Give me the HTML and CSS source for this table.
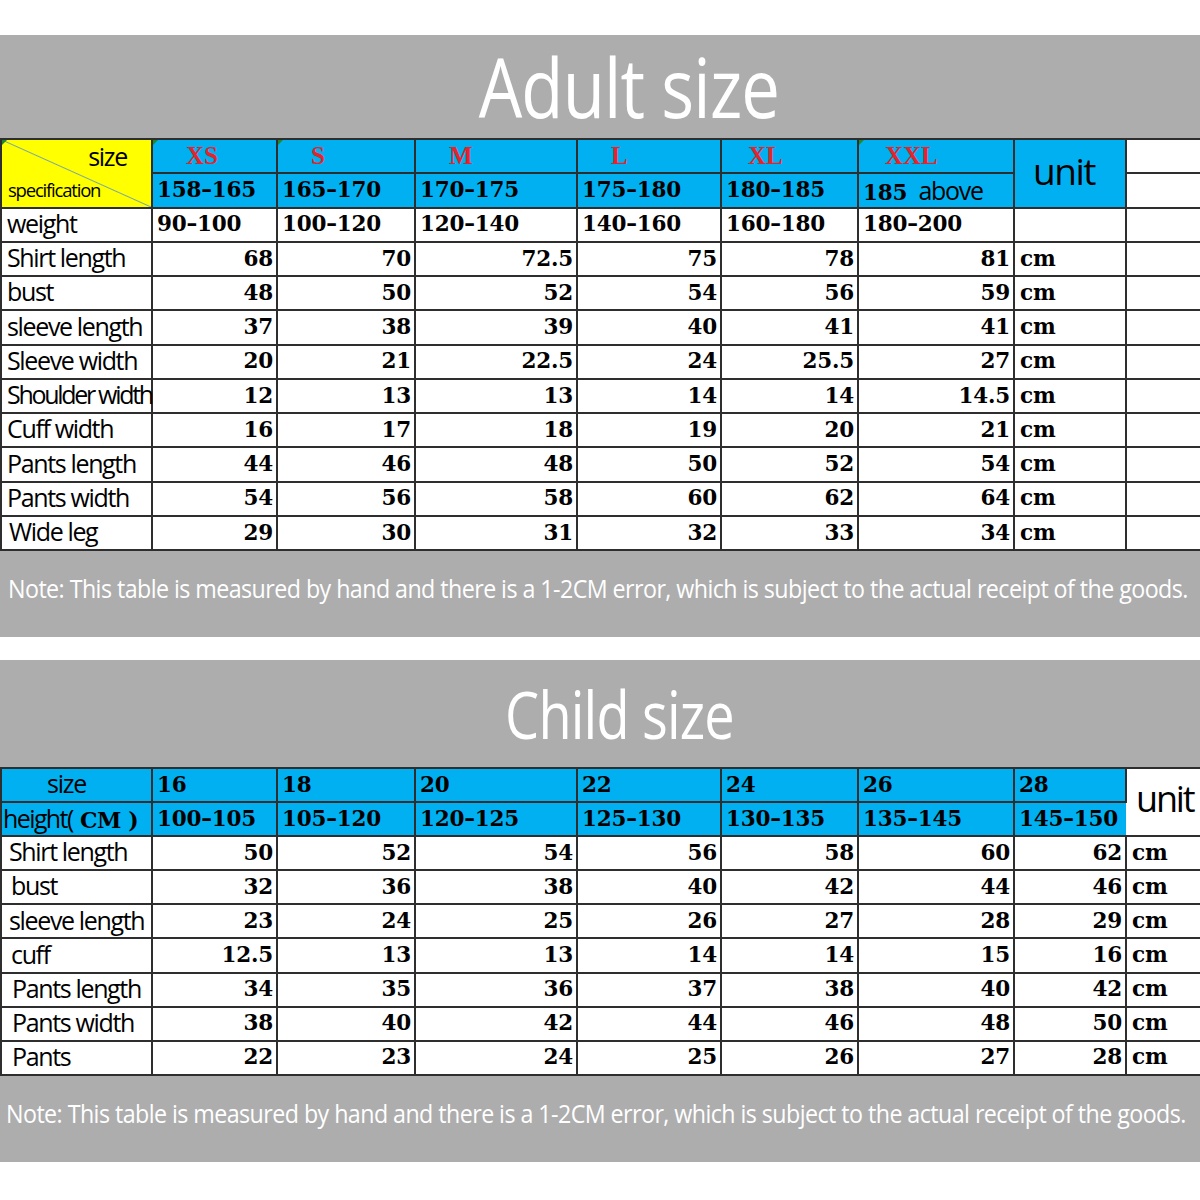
FILE: index.html
```html
<!DOCTYPE html>
<html lang="en">
<head>
<meta charset="utf-8">
<title>Size chart</title>
<link rel="stylesheet" href="styles.css">
</head>
<body>
<div class="page">
  <div class="top-space"></div>

  <div class="band title title-adult"><span>Adult size</span></div>

  <table class="sheet adult">
    <colgroup>
      <col class="c0"><col class="c1"><col class="c2"><col class="c3"><col class="c4"><col class="c5"><col class="c6"><col class="c7"><col class="c8">
    </colgroup>
    <tr class="hrow">
      <td class="spec mark" rowspan="2">
        <div class="spec-in"><span class="spec-size">size</span><span class="spec-name">specification</span></div>
      </td>
      <td class="blue sz mark">XS</td>
      <td class="blue sz mark">S</td>
      <td class="blue sz">M</td>
      <td class="blue sz">L</td>
      <td class="blue sz2">XL</td>
      <td class="blue sz2 mark">XXL</td>
      <td class="blue unit" rowspan="2">unit</td>
      <td class="x"></td>
    </tr>
    <tr class="hrow">
      <td class="blue n">158–165</td>
      <td class="blue n">165–170</td>
      <td class="blue n">170–175</td>
      <td class="blue n">175–180</td>
      <td class="blue n">180–185</td>
      <td class="blue n">185 <span class="lab-in">above</span></td>
      <td class="x"></td>
    </tr>
    <tr>
      <td class="lab">weight</td>
      <td class="n">90–100</td>
      <td class="n">100–120</td>
      <td class="n">120–140</td>
      <td class="n">140–160</td>
      <td class="n">160–180</td>
      <td class="n">180–200</td>
      <td></td>
      <td class="x"></td>
    </tr>
    <tr><td class="lab">Shirt length</td><td class="n r">68</td><td class="n r">70</td><td class="n r">72.5</td><td class="n r">75</td><td class="n r">78</td><td class="n r">81</td><td class="n cm">cm</td><td class="x"></td></tr>
    <tr><td class="lab">bust</td><td class="n r">48</td><td class="n r">50</td><td class="n r">52</td><td class="n r">54</td><td class="n r">56</td><td class="n r">59</td><td class="n cm">cm</td><td class="x"></td></tr>
    <tr><td class="lab">sleeve length</td><td class="n r">37</td><td class="n r">38</td><td class="n r">39</td><td class="n r">40</td><td class="n r">41</td><td class="n r">41</td><td class="n cm">cm</td><td class="x"></td></tr>
    <tr><td class="lab">Sleeve width</td><td class="n r">20</td><td class="n r">21</td><td class="n r">22.5</td><td class="n r">24</td><td class="n r">25.5</td><td class="n r">27</td><td class="n cm">cm</td><td class="x"></td></tr>
    <tr><td class="lab tight">Shoulder width</td><td class="n r">12</td><td class="n r">13</td><td class="n r">13</td><td class="n r">14</td><td class="n r">14</td><td class="n r">14.5</td><td class="n cm">cm</td><td class="x"></td></tr>
    <tr><td class="lab">Cuff width</td><td class="n r">16</td><td class="n r">17</td><td class="n r">18</td><td class="n r">19</td><td class="n r">20</td><td class="n r">21</td><td class="n cm">cm</td><td class="x"></td></tr>
    <tr><td class="lab">Pants length</td><td class="n r">44</td><td class="n r">46</td><td class="n r">48</td><td class="n r">50</td><td class="n r">52</td><td class="n r">54</td><td class="n cm">cm</td><td class="x"></td></tr>
    <tr><td class="lab">Pants width</td><td class="n r">54</td><td class="n r">56</td><td class="n r">58</td><td class="n r">60</td><td class="n r">62</td><td class="n r">64</td><td class="n cm">cm</td><td class="x"></td></tr>
    <tr><td class="lab wide">Wide leg</td><td class="n r">29</td><td class="n r">30</td><td class="n r">31</td><td class="n r">32</td><td class="n r">33</td><td class="n r">34</td><td class="n cm">cm</td><td class="x"></td></tr>
  </table>

  <div class="band note note-adult"><span>Note: This table is measured by hand and there is a 1-2CM error, which is subject to the actual receipt of the goods.</span></div>

  <div class="gap"></div>

  <div class="band title title-child"><span>Child size</span></div>

  <table class="sheet child">
    <colgroup>
      <col class="c0"><col class="c1"><col class="c2"><col class="c3"><col class="c4"><col class="c5"><col class="c6"><col class="c7"><col class="c8">
    </colgroup>
    <tr class="hrow">
      <td class="blue lab-c">size</td>
      <td class="blue n">16</td>
      <td class="blue n">18</td>
      <td class="blue n">20</td>
      <td class="blue n">22</td>
      <td class="blue n">24</td>
      <td class="blue n">26</td>
      <td class="blue n">28</td>
      <td class="unit-c" rowspan="2">unit</td>
    </tr>
    <tr class="hrow">
      <td class="blue hgt"><span class="lab-in">height(</span><span class="n-in"> CM )</span></td>
      <td class="blue n">100–105</td>
      <td class="blue n">105–120</td>
      <td class="blue n">120–125</td>
      <td class="blue n">125–130</td>
      <td class="blue n">130–135</td>
      <td class="blue n">135–145</td>
      <td class="blue n">145–150</td>
    </tr>
    <tr><td class="lab lc">Shirt length</td><td class="n r">50</td><td class="n r">52</td><td class="n r">54</td><td class="n r">56</td><td class="n r">58</td><td class="n r">60</td><td class="n r">62</td><td class="n cm">cm</td></tr>
    <tr><td class="lab lc2">bust</td><td class="n r">32</td><td class="n r">36</td><td class="n r">38</td><td class="n r">40</td><td class="n r">42</td><td class="n r">44</td><td class="n r">46</td><td class="n cm">cm</td></tr>
    <tr><td class="lab lc">sleeve length</td><td class="n r">23</td><td class="n r">24</td><td class="n r">25</td><td class="n r">26</td><td class="n r">27</td><td class="n r">28</td><td class="n r">29</td><td class="n cm">cm</td></tr>
    <tr><td class="lab lc2">cuff</td><td class="n r">12.5</td><td class="n r">13</td><td class="n r">13</td><td class="n r">14</td><td class="n r">14</td><td class="n r">15</td><td class="n r">16</td><td class="n cm">cm</td></tr>
    <tr><td class="lab lc3">Pants length</td><td class="n r">34</td><td class="n r">35</td><td class="n r">36</td><td class="n r">37</td><td class="n r">38</td><td class="n r">40</td><td class="n r">42</td><td class="n cm">cm</td></tr>
    <tr><td class="lab lc3">Pants width</td><td class="n r">38</td><td class="n r">40</td><td class="n r">42</td><td class="n r">44</td><td class="n r">46</td><td class="n r">48</td><td class="n r">50</td><td class="n cm">cm</td></tr>
    <tr><td class="lab lc3">Pants</td><td class="n r">22</td><td class="n r">23</td><td class="n r">24</td><td class="n r">25</td><td class="n r">26</td><td class="n r">27</td><td class="n r">28</td><td class="n cm">cm</td></tr>
  </table>

  <div class="band note note-child"><span>Note: This table is measured by hand and there is a 1-2CM error, which is subject to the actual receipt of the goods.</span></div>
</div>
</body>
</html>
```

FILE: styles.css
```css
html, body {
  margin: 0;
  padding: 0;
  background: #ffffff;
}

.page {
  width: 1200px;
  font-family: "Open Sans", "Noto Sans", sans-serif;
  color: #000;
  overflow: hidden;
}

.top-space {
  height: 35px;
}

.band {
  background: #adadad;
  color: #ffffff;
  display: flex;
  align-items: center;
}

.title {
  justify-content: center;
}

.title span {
  display: inline-block;
  line-height: 1.1;
  white-space: nowrap;
  letter-spacing: -1px;
}

.title-adult {
  height: 103px;
  padding-left: 58px;
}

.title-adult span {
  font-size: 82px;
  transform: scaleX(0.84);
}

.title-child {
  height: 107px;
  padding-left: 40px;
}

.title-child span {
  font-size: 66px;
  transform: scaleX(0.82);
}

.note {
  box-sizing: border-box;
  padding-left: 8px;
  padding-bottom: 12px;
}

.note-adult {
  height: 86px;
}

.note-child {
  height: 86px;
  padding-left: 6px;
}

.note span {
  display: inline-block;
  font-size: 25px;
  line-height: 1.3;
  white-space: nowrap;
  letter-spacing: -0.6px;
  transform-origin: left center;
  transform: scaleX(0.93);
}

.gap {
  height: 23px;
}

/* tables */
.sheet {
  border-collapse: collapse;
  table-layout: fixed;
  width: 1200px;
  background: #ffffff;
}

.c0 { width: 151px; }
.c1 { width: 125px; }
.c2 { width: 138px; }
.c3 { width: 162px; }
.c4 { width: 144px; }
.c5 { width: 137px; }
.c6 { width: 156px; }
.c7 { width: 112px; }
.c8 { width: 75px; }

.sheet tr {
  height: 34.25px;
}

.child tr {
  height: 34.1px;
}

.sheet td {
  border: 2px solid #2e2e2e;
  padding: 0 3px 0 4px;
  white-space: nowrap;
  vertical-align: middle;
  line-height: 1.15;
  position: relative;
}

.sheet td:last-child {
  border-right-style: hidden;
}

.blue {
  background: #00b0f0;
}

.sheet .n {
  font-family: "DejaVu Serif", "Liberation Serif", serif;
  font-weight: bold;
  font-size: 21.5px;
  letter-spacing: -0.2px;
}

.sheet .r {
  text-align: right;
}

.sheet .cm {
  padding-left: 5px;
}

.sheet .lab {
  font-size: 25px;
  letter-spacing: -1.35px;
  padding-left: 5px;
  padding-bottom: 3px;
}

.sheet .lab.tight {
  letter-spacing: -2.3px;
  padding-left: 5px;
}

.sheet .lab.wide {
  padding-left: 7px;
}

.sheet .lc { padding-left: 7px; }
.sheet .lc2 { padding-left: 9px; }
.sheet .lc3 { padding-left: 10px; }

.lab-in {
  font-family: "Open Sans", "Noto Sans", sans-serif;
  font-weight: normal;
  font-size: 25px;
  letter-spacing: -1.35px;
  margin-left: 4px;
}

/* adult header */
.sheet .spec {
  background-color: #ffff00;
  background-image: linear-gradient(to top right, transparent calc(50% - 1px), #7aa8a0 50%, transparent calc(50% + 1px));
  padding: 0;
}

.spec-in {
  height: 64px;
  display: flex;
  flex-direction: column;
  justify-content: space-between;
}

.spec-size {
  align-self: flex-end;
  font-size: 25px;
  letter-spacing: -1.3px;
  padding-right: 24px;
  line-height: 1.1;
  margin-top: 2px;
}

.spec-name {
  font-size: 18.5px;
  letter-spacing: -1.2px;
  padding-left: 6px;
  line-height: 1.2;
  margin-bottom: 4px;
}

.sheet .sz,
.sheet .sz2 {
  font-family: "Liberation Serif", "Times New Roman", serif;
  font-weight: bold;
  font-size: 25px;
  color: #e3242b;
  padding-left: 33px;
}

.sheet .sz2 {
  padding-left: 26px;
}

.sheet .unit {
  font-size: 37px;
  letter-spacing: -1.5px;
  text-align: center;
  padding: 0 12px 4px 0;
}

.sheet .x {
  background: #ffffff;
}

.mark::before {
  content: "";
  position: absolute;
  left: 0;
  top: 0;
  width: 0;
  height: 0;
  border-top: 5px solid #1f8a2a;
  border-right: 5px solid transparent;
}

/* child header */
.sheet .lab-c {
  font-size: 25px;
  letter-spacing: -1.3px;
  text-align: center;
  padding: 0 20px 3px 0;
}

.sheet .hgt {
  padding-left: 0;
}

.hgt .lab-in {
  margin-left: 1px;
  letter-spacing: -1.6px;
}

.n-in {
  font-family: "DejaVu Serif", "Liberation Serif", serif;
  font-weight: bold;
  font-size: 22px;
  letter-spacing: -0.4px;
}

.sheet .unit-c {
  background: #ffffff;
  font-size: 36px;
  letter-spacing: -2.2px;
  padding: 0 0 6px 9px;
}
```
